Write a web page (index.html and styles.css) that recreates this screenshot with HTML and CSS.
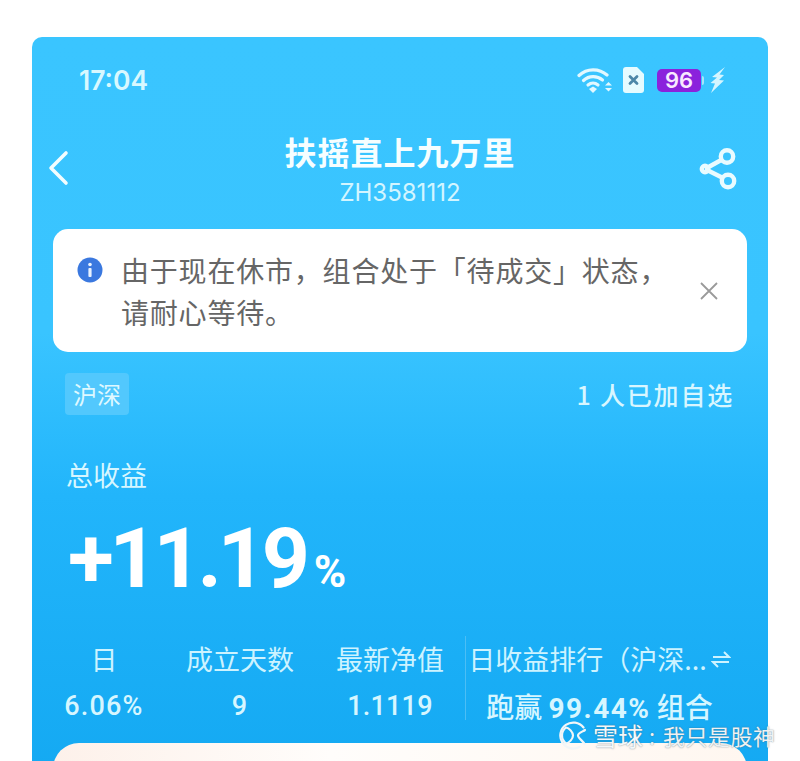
FILE: index.html
```html
<!DOCTYPE html>
<html lang="zh">
<head>
<meta charset="utf-8">
<title>扶摇直上九万里</title>
<link rel="stylesheet" href="styles.css">
</head>
<body>
<main class="card">
  <div class="status">
    <span class="time">17:04</span>
    <div class="status-icons">
      <svg class="wifi" width="36" height="26" viewBox="0 0 36 26" fill="none" stroke="#e2f8ff" stroke-linecap="round">
        <path d="M2 8.500C10 1 22 1 30 8" stroke-width="3.200"/>
        <path d="M6.500 13.500C12 8.500 20 8.500 25.500 13" stroke-width="3.200"/>
        <path d="M11 18C14 15.500 18 15.500 21 18" stroke-width="3.200"/>
        <path d="M12 22L16 19.500L20 22L16 26Z" fill="#e2f8ff" stroke="none"/>
        <path d="M28 18.500L31.500 15L35 18.500Z" fill="#e2f8ff" stroke="none"/>
        <path d="M28 21L31.500 24.500L35 21Z" fill="#e2f8ff" stroke="none"/>
      </svg>
      <svg class="sim" width="21" height="26" viewBox="0 0 21 26">
        <path d="M3 0H14L21 7V23a3 3 0 0 1-3 3H3a3 3 0 0 1-3-3V3a3 3 0 0 1 3-3Z" fill="#e6fbff"/>
        <path d="M7 9.500L14 16.500M14 9.500L7 16.500" stroke="#4d87a8" stroke-width="2.800" stroke-linecap="round"/>
      </svg>
      <span class="battery">96</span>
      <svg class="bolt" width="15" height="26" viewBox="0 0 15 26">
        <path d="M15 0L2 10L7 10.500L0.500 16L5 16.500L1 26L14 13.500L9 13L14 8L9.500 7.500Z" fill="#d4f5ff"/>
      </svg>
    </div>
  </div>

  <header class="nav">
    <svg class="back" width="22" height="36" viewBox="0 0 22 36" fill="none">
      <path d="M19 3L4 18L19 33" stroke="#f2fdff" stroke-width="3.600" stroke-linecap="round" stroke-linejoin="round"/>
    </svg>
    <div class="nav-title">
      <h1 class="title">扶摇直上九万里</h1>
      <p class="code">ZH3581112</p>
    </div>
    <svg class="share" width="40" height="44" viewBox="0 0 40 44" fill="none" stroke="#e9fbff" stroke-width="4.400">
      <path d="M6 21L24 11M6 21L24 30"/>
      <circle cx="28" cy="8.500" r="6.200" />
      <circle cx="29" cy="33" r="6.200"/>
      <circle cx="6" cy="21" r="3.200"/>
    </svg>
  </header>

  <section class="notice">
    <svg class="info" width="26" height="26" viewBox="0 0 26 26">
      <circle cx="13" cy="13" r="12.500" fill="#3a78df"/>
      <circle cx="13" cy="7.500" r="1.800" fill="#e8f2ff"/>
      <rect x="11.400" y="11" width="3.200" height="9" rx="1" fill="#e8f2ff"/>
    </svg>
    <p class="notice-text">由于现在休市，组合处于「待成交」状态，<br>请耐心等待。</p>
    <svg class="close" width="20" height="20" viewBox="0 0 20 20" fill="none">
      <path d="M2 2L18 18M18 2L2 18" stroke="#9a9a9a" stroke-width="1.800"/>
    </svg>
  </section>

  <div class="meta">
    <span class="tag">沪深</span>
    <span class="watchers">1 人已加自选</span>
  </div>

  <section class="total">
    <p class="total-label">总收益</p>
    <p class="total-value">+11.19<span class="percent">%</span></p>
  </section>

  <section class="stats">
    <div class="stat stat-day"><span class="stat-label">日</span><span class="stat-value">6.06%</span></div>
    <div class="stat stat-days"><span class="stat-label">成立天数</span><span class="stat-value">9</span></div>
    <div class="stat stat-nav"><span class="stat-label">最新净值</span><span class="stat-value value-tight">1.1119</span></div>
    <div class="stat stat-rank">
      <span class="stat-label">日收益排行（沪深... <svg class="swap" width="20" height="18" viewBox="0 0 20 18" fill="none" stroke="#cdf3ff" stroke-width="2"><path d="M2 7H18L13 2M18 12H2L7 17"/></svg></span>
      <span class="stat-value rank-value">跑赢 <b>99.44%</b> 组合</span>
    </div>
  </section>

  <div class="next-card"></div>
</main>

<div class="watermark">
  <svg class="wm-logo" width="29" height="29" viewBox="0 0 29 29" fill="none" stroke="#f2f6f8" stroke-width="2.200" stroke-linecap="round">
    <path d="M21.500 26A13 13 0 1 1 25.500 6.500"/>
    <path d="M8 6.500C11 7 15 11 15 14.500C15 18 11 22 8 22.500C5 20 4 17 4 14.500C4 11.500 5.500 8.500 8 6.500Z"/>
    <path d="M27 9C25 10.500 20 12 20 14.500C20 17 25 20 26.500 23"/>
  </svg>
  <span class="wm-brand">雪球</span>
  <span class="wm-name">: 我只是股神</span>
</div>
</body>
</html>
```

FILE: styles.css
```css
* { box-sizing: border-box; }

html, body { margin: 0; height: 761px; overflow: hidden; background: #fff; }

body {
  padding: 37px 32px 0;
  position: relative;
  font-family: "Noto Sans CJK SC", "Noto Sans", sans-serif;
}

p, h1 { margin: 0; font-weight: inherit; }

.card {
  height: 740px;
  border-radius: 10px;
  padding: 0 21px;
  overflow: hidden;
  background: linear-gradient(180deg, #3ac5ff 0%, #39c4ff 40%, #22b5fb 62%, #14a9f2 100%);
  color: #d6f6ff;
  display: flex;
  flex-direction: column;
}

.status {
  height: 86px;
  padding: 26px 22px 0 26px;
  display: flex;
  justify-content: space-between;
  align-items: flex-start;
  flex: none;
}

.time {
  font: 600 26.500px/34px Inter, "Noto Sans", sans-serif;
  color: #d8f8ff;
}

.status-icons {
  display: flex;
  align-items: center;
  height: 34px;
}

.sim { margin-left: 10px; }

.battery {
  position: relative;
  width: 44px;
  height: 23px;
  margin-left: 13px;
  background: #8b22dc;
  border-radius: 5px;
  color: #f8eaff;
  text-align: center;
  font: 600 22px/23px Inter, "Noto Sans", sans-serif;
}

.battery::after {
  content: "";
  position: absolute;
  left: 45px;
  top: 7px;
  width: 2px;
  height: 9px;
  border-radius: 0 2px 2px 0;
  background: #a9e3fb;
}

.bolt { margin-left: 9px; }

.nav {
  height: 106px;
  flex: none;
  display: flex;
  justify-content: center;
  position: relative;
}

.back { position: absolute; left: -6px; top: 27px; }
.share { position: absolute; right: 8px; top: 25px; }

.nav-title {
  text-align: center;
  padding-top: 6px;
}

.title {
  font-size: 32px;
  line-height: 44px;
  font-weight: 700;
  color: #f6feff;
  letter-spacing: 1px;
}

.code {
  margin-top: 6px;
  font: 400 24px/28px Inter, "Noto Sans", sans-serif;
  color: #d2f5ff;
}

.notice {
  height: 123px;
  background: #fff;
  border-radius: 15px;
  display: flex;
  align-items: flex-start;
  padding: 27px 28px 0 24px;
  margin-bottom: 19px;
  flex: none;
}

.info { flex: none; margin-right: 18px; margin-top: 1px; }

.notice-text {
  flex: 1;
  font-size: 28px;
  line-height: 42px;
  letter-spacing: 0.8px;
  margin-top: -7px;
  color: #666;
  white-space: nowrap;
}

.close { flex: none; margin-top: 25px; }

.meta {
  height: 46px;
  display: flex;
  justify-content: space-between;
  align-items: center;
  padding: 0 13px 0 12px;
  flex: none;
}

.tag {
  width: 64px;
  height: 42px;
  border-radius: 4px;
  background: #52c8fd;
  text-align: center;
  font-size: 24px;
  line-height: 42px;
  color: #dff8ff;
}

.watchers {
  font-size: 25px;
  line-height: 42px;
  letter-spacing: 1.800px;
  font-weight: 500;
  color: #d8f6ff;
}

.total { padding: 0 13px; flex: none; }

.total-label {
  margin-top: 38px;
  font-size: 27px;
  line-height: 40px;
  color: #d6f6ff;
}

.total-value {
  margin-top: 14px;
  height: 98px;
  padding-left: 2px;
  font: 700 84px/100px Roboto, "Noto Sans", sans-serif;
  letter-spacing: -4.200px;
  color: #fff;
}

.percent { font-size: 44px; font-weight: 700; margin-left: 8px; letter-spacing: 0; }

.stats {
  margin-top: 29px;
  display: flex;
  flex: none;
  height: 88px;
}

.stat {
  display: flex;
  flex-direction: column;
  align-items: center;
  white-space: nowrap;
}

.stat-day { width: 102px; }
.stat-days { width: 170px; }
.stat-nav { width: 140px; margin-left: -5px; }
.stat-rank {
  flex: 1;
  margin-left: 5px;
  padding-right: 14px;
  border-left: 1px solid #4cbef5;
  height: 84px;
}

.stat-label {
  font-size: 27px;
  line-height: 46px;
  color: #cdf3ff;
  display: flex;
  align-items: center;
  gap: 4px;
}

.stat-value {
  margin-top: 10px;
  font: 500 27px/28px Roboto, "Noto Sans", sans-serif;
  letter-spacing: 1.200px;
  color: #d6f6ff;
}

.value-tight { letter-spacing: 0.200px; }

.rank-value {
  font-family: "Noto Sans CJK SC", sans-serif;
  font-size: 28px;
  font-weight: 500;
  letter-spacing: 0;
}

.rank-value b { font-family: Roboto, sans-serif; font-weight: 700; letter-spacing: 1.500px; }

.next-card {
  height: 60px;
  margin-top: 19px;
  flex: none;
  background: linear-gradient(90deg, #fdf1ea, #fffdfb 40%, #fff7f0);
  border-radius: 26px 26px 0 0;
}

.watermark {
  position: absolute;
  left: 558px;
  top: 722px;
  display: flex;
  align-items: center;
  gap: 6px;
  height: 26px;
  white-space: nowrap;
  color: #f4f8fa;
  text-shadow: 0 0 1.500px rgba(70, 95, 110, 0.8);
}

.wm-brand { font-size: 25px; line-height: 26px; }
.wm-name { font-size: 22px; line-height: 26px; color: #eef2f4; letter-spacing: 0.5px; word-spacing: 2px; }
```
